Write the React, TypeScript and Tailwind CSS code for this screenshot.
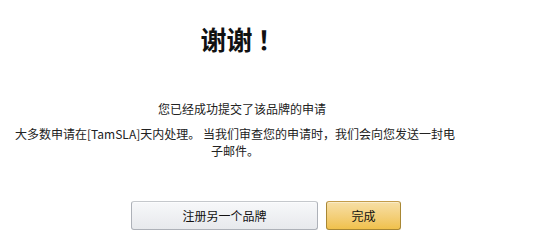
import React from 'react';

const font = { fontFamily: '"Noto Sans CJK SC", "Liberation Sans", sans-serif' };

export default function App() {
  return (
    <div className="w-[542px] h-[252px] bg-white text-[#111] pt-[23px]" style={font}>
      <h1 className="ml-[13px] w-[458px] text-center text-[26px] font-bold leading-[31px]">
        谢谢<span className="ml-[5px]">！</span>
      </h1>

      <p className="ml-[13px] w-[458px] mt-[46px] text-center text-[12px] leading-[17px] text-[#222]">
        您已经成功提交了该品牌的申请
      </p>

      <p className="ml-[15px] w-[440px] mt-[8px] text-center text-[12px] leading-[17px] text-[#222]">
        大多数申请在[TamSLA]天内处理。 当我们审查您的申请时，我们会向您发送一封电子邮件。
      </p>

      <div className="flex gap-[8px] ml-[131px] mt-[42px]">
        <button className="w-[187px] h-[29px] rounded-[3px] border border-[#adb1b8] border-t-[#c5c8cc] bg-gradient-to-b from-[#f7f8fa] to-[#e7e9ec] text-[12px] text-[#111] shadow-[inset_0_1px_0_rgba(255,255,255,0.6)]">
          注册另一个品牌
        </button>
        <button className="w-[75px] h-[29px] rounded-[3px] border border-[#a88734] border-t-[#c49c4a] bg-gradient-to-b from-[#f7dfa5] to-[#f0c14b] text-[12px] text-[#111] shadow-[inset_0_1px_0_rgba(255,255,255,0.4)]">
          完成
        </button>
      </div>
    </div>
  );
}
